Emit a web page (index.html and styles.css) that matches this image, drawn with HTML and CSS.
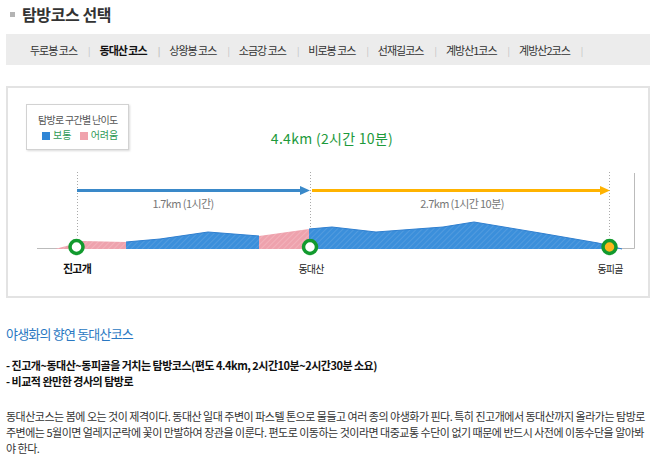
FILE: index.html
```html
<!DOCTYPE html>
<html>
<head>
    <title>탐방코스 선택</title>
    <link rel="stylesheet" href="styles.css">
</head>
<body>
    <div class="page">
        <h2 class="title">탐방코스 선택</h2>

        <ul class="course-nav">
            <li>두로봉 코스</li>
            <li class="active">동대산 코스</li>
            <li>상왕봉 코스</li>
            <li>소금강 코스</li>
            <li>비로봉 코스</li>
            <li>선재길코스</li>
            <li>계방산1코스</li>
            <li>계방산2코스</li>
        </ul>

        <div class="chart">
            <div class="chart-head">
                <div class="legend">
                    <p class="legend-title">탐방로 구간별 난이도</p>
                    <p class="legend-items">
                        <span class="swatch swatch-normal"></span>보통
                        <span class="swatch swatch-hard"></span>어려움
                    </p>
                </div>
                <p class="total">4.4km (2시간 10분)</p>
            </div>

            <svg class="profile" width="640" height="146" viewBox="8 150 640 146">
                <defs>
                    <pattern id="hatch-blue" width="4" height="4" patternUnits="userSpaceOnUse" patternTransform="rotate(45)">
                        <rect width="4" height="4" fill="#3b8fdb"/>
                        <line x1="0" y1="0" x2="0" y2="4" stroke="#5a9fe0" stroke-width="1.5"/>
                    </pattern>
                    <pattern id="hatch-pink" width="4" height="4" patternUnits="userSpaceOnUse" patternTransform="rotate(45)">
                        <rect width="4" height="4" fill="#eea2ad"/>
                        <line x1="0" y1="0" x2="0" y2="4" stroke="#f4b8c0" stroke-width="1.5"/>
                    </pattern>
                </defs>

                <!-- guide lines -->
                <line class="guide" x1="77.5" y1="172" x2="77.5" y2="238"/>
                <line class="guide" x1="310.5" y1="172" x2="310.5" y2="238"/>
                <line class="guide" x1="609.5" y1="172" x2="609.5" y2="238"/>
                <polyline class="edge" points="620,248.5 634.5,248.5 634.5,173"/>
                <line class="edge" x1="37" y1="248.5" x2="58" y2="248.5"/>

                <!-- arrows -->
                <line x1="77" y1="190.5" x2="302" y2="190.5" stroke="#3a89c9" stroke-width="3"/>
                <polygon points="300,186 310,190.5 300,195" fill="#3a89c9"/>
                <line x1="312" y1="190.5" x2="602" y2="190.5" stroke="#ffb300" stroke-width="3"/>
                <polygon points="600,186 610,190.5 600,195" fill="#ffb300"/>

                <text class="dist" x="183" y="208">1.7km (1시간)</text>
                <text class="dist" x="462" y="208">2.7km (1시간 10분)</text>

                <!-- elevation -->
                <polygon points="55,249 70,245 83,241 126,242 126,249" fill="url(#hatch-pink)"/>
                <polygon points="126,249 126,242 160,239 208,232 259,236 259,249" fill="url(#hatch-blue)"/>
                <polygon points="259,249 259,236 309,229 309,249" fill="url(#hatch-pink)"/>
                <polygon points="309,249 309,229 332,227 376,232 443,227 474,222 540,233 598,243 622,249" fill="url(#hatch-blue)"/>
                <polyline points="126,242 160,239 208,232 259,236" fill="none" stroke="#2f7fcf" stroke-width="1"/>
                <polyline points="309,229 332,227 376,232 443,227 474,222 540,233 598,243 622,249" fill="none" stroke="#2f7fcf" stroke-width="1"/>

                <!-- stops -->
                <circle cx="76.5" cy="247" r="6.5" fill="#fff" stroke="#129a2e" stroke-width="3.5"/>
                <circle cx="310" cy="247" r="6.5" fill="#fff" stroke="#129a2e" stroke-width="3.5"/>
                <circle cx="609.5" cy="247" r="6.5" fill="#ffb61c" stroke="#129a2e" stroke-width="3.5"/>

                <text class="stop stop-start" x="77" y="273">진고개</text>
                <text class="stop" x="311" y="273">동대산</text>
                <text class="stop" x="610" y="273">동피골</text>
            </svg>
        </div>

        <h3 class="course-name">야생화의 향연 동대산코스</h3>
        <p class="summary">
            - 진고개~동대산~동피골을 거치는 탐방코스(편도 4.4km, 2시간10분~2시간30분 소요)<br>
            - 비교적 완만한 경사의 탐방로
        </p>
        <p class="desc">동대산코스는 봄에 오는 것이 제격이다. 동대산 일대 주변이 파스텔 톤으로 물들고 여러 종의 야생화가 핀다. 특히 진고개에서 동대산까지 올라가는 탐방로 주변에는 5월이면 얼레지군락에 꽃이 만발하여 장관을 이룬다. 편도로 이동하는 것이라면 대중교통 수단이 없기 때문에 반드시 사전에 이동수단을 알아봐야 한다.</p>
    </div>
</body>
</html>
```

FILE: styles.css
```css
body {
    margin: 0;
    background-color: #ffffff;
    font-family: "Noto Sans CJK KR", "Noto Sans", sans-serif;
    color: #333333;
}

p,
h2,
h3,
ul {
    margin: 0;
    padding: 0;
}

.page {
    padding-left: 6px;
}

/* page title */
.title {
    display: flex;
    align-items: center;
    gap: 7px;
    padding: 4px 0 0 4px;
    height: 20px;
    font-size: 16px;
    font-weight: bold;
    letter-spacing: -0.4px;
    color: #333333;
}

.title::before {
    content: "";
    width: 5px;
    height: 5px;
    background-color: #b4b4b4;
}

/* course tabs */
.course-nav {
    display: flex;
    align-items: center;
    list-style: none;
    margin-top: 10px;
    padding-left: 24px;
    height: 31px;
    background-color: #ececec;
    font-size: 11px;
    letter-spacing: -1px;
    color: #333333;
}

.course-nav li::after {
    content: "|";
    margin: 0 10px 0 11px;
    font-size: 9px;
    color: #c0c0c0;
}

.course-nav .active {
    font-weight: bold;
    color: #111111;
}

/* route chart */
.chart {
    margin-top: 21px;
    border: 2px solid #e3e3e3;
    box-sizing: border-box;
}

.chart-head {
    display: grid;
    grid-template-columns: 1fr auto 1fr;
    padding: 16px 18px 0;
}

.legend {
    justify-self: start;
    box-sizing: border-box;
    width: 103px;
    height: 46px;
    padding: 8px 0 0 11px;
    border: 1px solid #d2d2d2;
    box-shadow: 1px 1px 2px rgba(0, 0, 0, 0.15);
    font-size: 10px;
    line-height: 14px;
    letter-spacing: -0.7px;
}

.legend-title {
    color: #555555;
}

.legend-items {
    margin-top: 1px;
    padding-left: 4px;
    letter-spacing: 0;
    color: #2f9a55;
}

.swatch {
    display: inline-block;
    width: 8px;
    height: 8px;
    margin-right: 3px;
    vertical-align: -1px;
}

.swatch-normal {
    background-color: #2f86d6;
}

.swatch-hard {
    margin-left: 6px;
    background-color: #f0a3ad;
}

.total {
    align-self: end;
    margin: 0 0 3px 8px;
    font-size: 14px;
    line-height: 18px;
    letter-spacing: 0.3px;
    color: #1d9a3c;
}

.profile {
    display: block;
}

.guide {
    stroke: #aaaaaa;
    stroke-width: 1;
    stroke-dasharray: 1 2;
}

.edge {
    fill: none;
    stroke: #bbbbbb;
    stroke-width: 1;
}

.dist {
    font-size: 11px;
    letter-spacing: -0.6px;
    fill: #777777;
    text-anchor: middle;
}

.stop {
    font-size: 10px;
    letter-spacing: -0.8px;
    fill: #222222;
    text-anchor: middle;
}

.stop-start {
    font-size: 11px;
    font-weight: bold;
    fill: #111111;
}

/* course description */
.course-name {
    margin-top: 27px;
    font-size: 13px;
    line-height: 18px;
    font-weight: normal;
    letter-spacing: -0.8px;
    color: #2a78c2;
}

.summary {
    margin-top: 14px;
    font-size: 11px;
    line-height: 16px;
    font-weight: bold;
    letter-spacing: -0.5px;
    color: #111111;
}

.desc {
    margin-top: 19px;
    padding-right: 4px;
    font-size: 11px;
    line-height: 16px;
    letter-spacing: -0.5px;
    color: #333333;
}
```
